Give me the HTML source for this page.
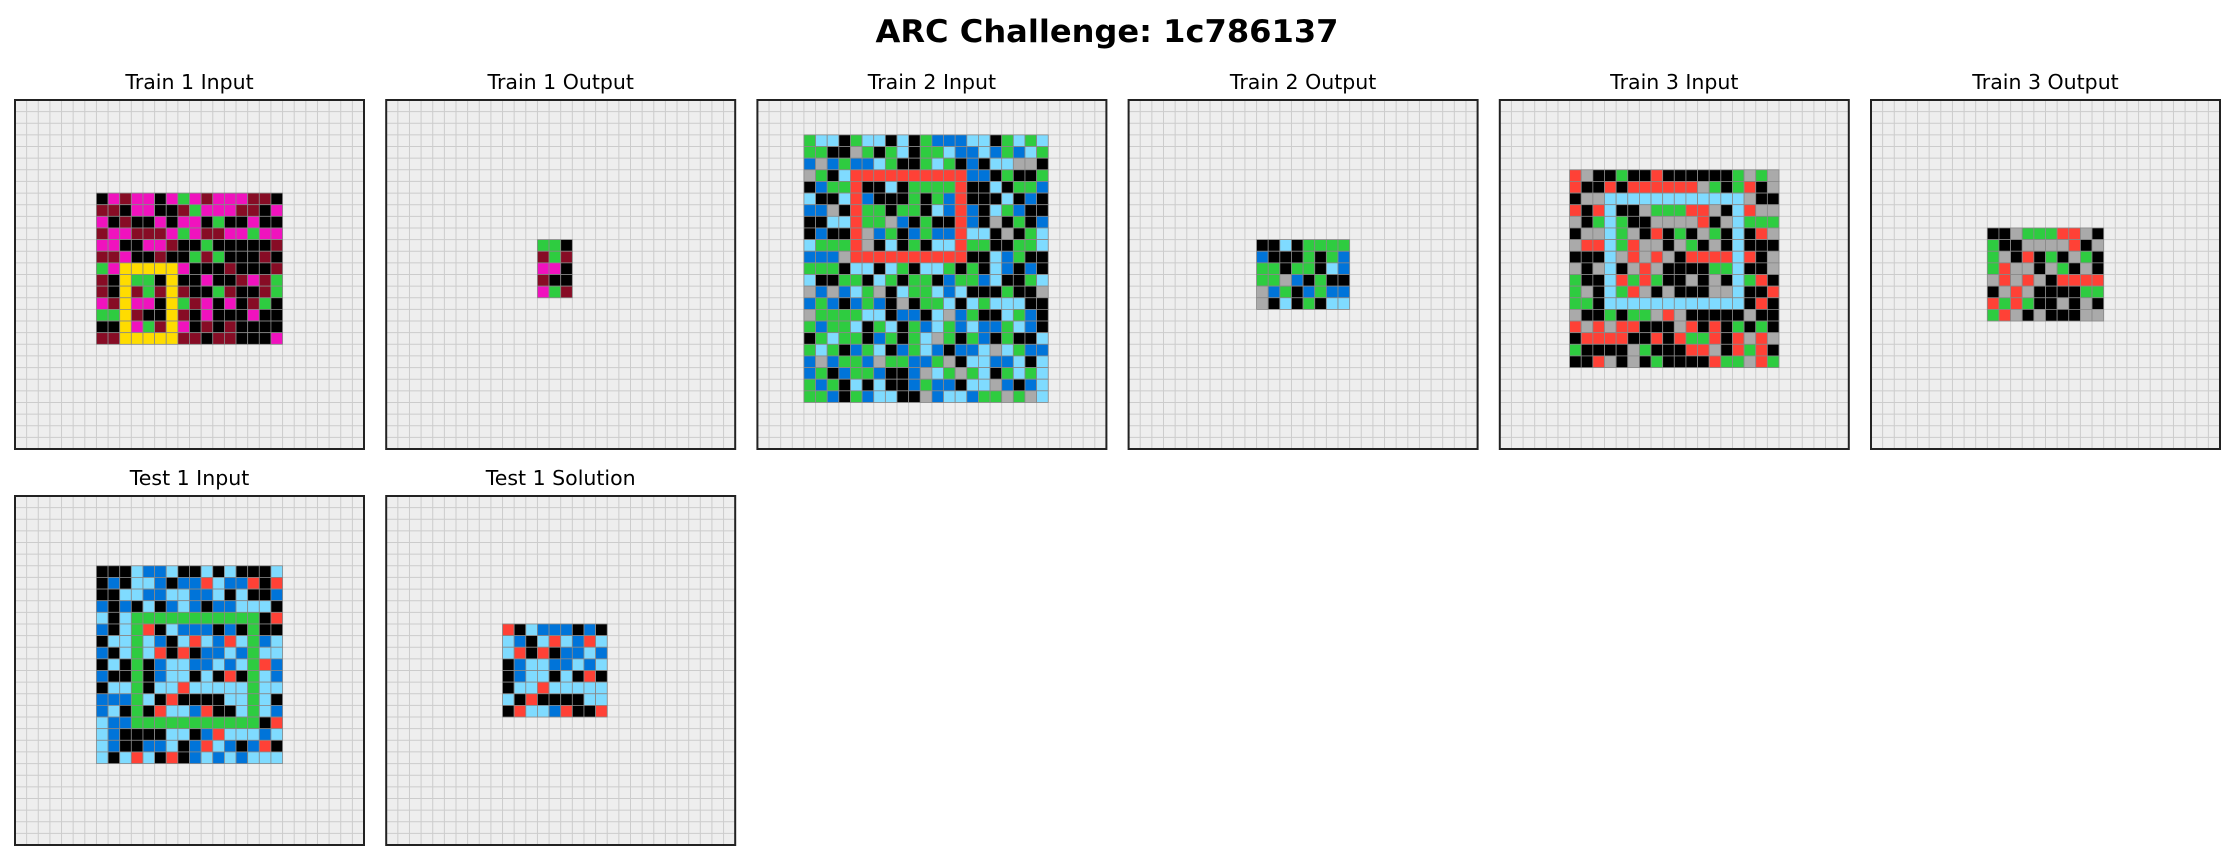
<!DOCTYPE html>
<html><head><meta charset="utf-8"><style>
html,body{margin:0;padding:0;background:#fff;width:2234px;height:860px;overflow:hidden}
</style></head><body>
<svg id="s" xmlns="http://www.w3.org/2000/svg" width="2234" height="860" viewBox="0 0 2234 860">
<rect width="2234" height="860" fill="#fff"/>
<text x="1107" y="42" text-anchor="middle" font-family="DejaVu Sans, Liberation Sans, sans-serif" font-weight="bold" font-size="31" textLength="463" lengthAdjust="spacingAndGlyphs" fill="#000">ARC Challenge: 1c786137</text>
</svg>
<script>
var C={K:'#000000',B:'#0074D9',R:'#FF4136',G:'#2ECC40',Y:'#FFDC00',X:'#AAAAAA',M:'#F012BE',L:'#7FDBFF',W:'#870C25'};
function g(s){return s.trim().split('\n').map(function(r){return r.trim().split(/\s+/)});}
var P=[
['Train 1 Input',0,0,7,8,g(`K M W M M K M G M W M M M W W K
W W K M M K K W G M M M W W K M
M K W K K M K M M K G K K M K K
W M M W W W M G M W W M M G M M
M M K K M M W K K G K K K K K W
W W M K K W K K G W G K K K W K
G M Y Y Y Y Y M K K K W K K K W
W K Y G G K Y K K M K K W M W G
W K Y W G W Y W K K G W K K W G
M W Y M M K Y G W M K M K W G K
G G Y W K K Y W K M K K K M K K
K K Y M G W Y M K W K W K K K K
W W Y Y Y Y Y W W K W W K K K M`)],
['Train 1 Output',1,0,13,12,g(`G G K
W G W
M M K
W K K
M G W`)],
['Train 2 Input',2,0,4,3,g(`G L L K G L L K L K G B B B L L K G L G L
G G K K X G K G L K G G L B B L B G B L G
B X B G B B L G K K G L G K B K L L X X K
X G K L R R R R R R R R R R B B K G K K G
K B G G R K K L K G G G G R K K L K G G B
L K K L R B K K K G K G B R K K K L K B K
B B X K R G G K G G K L B R B K L G B K K
K K L L R G G X B K G K K R B K X K G K B
K B K K R X B G K B G B B R L L K X K G L
L G G G R X K L K G K L L R G G K K G G L
B B B X R R R R R R R R R R K K L B G K K
G G G K L L K L G K L L G K G K L B K B K
L K K G G K L G K G G K B G G B L K K G L
X B X B L G X K L G G L B L K K K G K K X
B G B K B G B K X K G G L K L G L L L K K
X G G G G L L K B B K L X B G K K L G B K
G B G G L K G L K G B L G B L B B G L B K
K G L G G K B G K G L X G K G B K G K K L
G L G K B G L K B G L B K B B L X L G B B
B X B G G B X G G B B G X K L L B B L K L
B G K B G G B K K B X L G X G L K G L G L
G B G K L K L K K B G B B K L L X B K B L
G G B K G B L L K K X B L L B G G X G X L`)],
['Train 2 Output',3,0,11,12,g(`K K L K G G G G
B K K K G K G B
G G K G G K L B
G G X B K G K K
X B G K B G B B
X K L K G K L L`)],
['Train 3 Input',4,0,6,6,g(`R X K K G K K R K K K K K K G X G X
R K K R K R R R R R R X G K G R K X
K X X L L L L L L L L L L L L X K K
R K R L K K X G G G R R X K L R X X
X K G L G K K X X X X R K X L G G G
K X X L G X K R K G K X G K L K R X
X R R L G R X X K X G K X K L K K K
K K K L X R X R X K R R R R L R K X
X K X L K X R X K K K K G G L K K X
G K K L R G R G K K X K X K L G R K
G X K L G R X K X K K K X X L K K R
G G K L L L L L L L L L L L L K R K
X K K G K G G X R X K K K K K X K K
R X R X R R K K K X R K R K G K G K
K R R R R K K R K R G G R K R X R X
G K K K K X G K K K R R X K R G R K
K K R X K X K G K K K K R G G X R G`)],
['Train 3 Output',5,0,10,11,g(`K K X G G G R R X K
G K K X X X X R K X
G X K R K G K X G K
G R X X K X G K X K
X R X R X K R R R R
K X R X K K K K G G
R G R G K K X K X K
G R X K X K K K X X`)],
['Test 1 Input',0,1,7,6,g(`K K K L B B L K K L K L K K K L
K B K L L B K B B R L B B R K R
K K L L B B L L B B L K L K K B
B K B K L K B L B K B B L L L K
L K L G G G G G G G G G G G K R
B K L G R K L B B B K B K G K K
K L L G L B K L R L B R L G B L
B K L G L R K R K B B L B G L L
K L K G K B L L B B L B L G R B
B K K G K B L L K L K R K G L B
K L L G K L L R L L L L L G L L
B B B G L K R K K K K L L G L K
B L K G K R L L B R K K L G L B
L B B G G G G G G G G G G G K R
L B K K K K L L K B R L L L B L
L B K K B B L K B R L B K B R K
L K L R L K R K B L B L B L L L`)],
['Test 1 Solution',1,1,10,11,g(`R K L B B B K B K
L B K L R L B R L
L R K R K B B L B
K B L L B B L B L
K B L L K L K R K
K L L R L L L L L
L K R K K K K L L
K R L L B R K K R`)]
];
var h='',S=349,c=S/30;
P.forEach(function(p){
 var x0=15+p[1]*371.2,y0=p[2]?496:100;
 h+='<text x="'+(x0+S/2)+'" y="'+(y0-11)+'" text-anchor="middle" font-family="DejaVu Sans, Liberation Sans, sans-serif" font-size="20.5" fill="#000">'+p[0]+'</text>';
 h+='<rect x="'+x0+'" y="'+y0+'" width="'+S+'" height="'+S+'" fill="#EEEEEE"/>';
 for(var i=1;i<30;i++){var a=(i*c).toFixed(2);
  h+='<line x1="'+(x0+ +a)+'" y1="'+y0+'" x2="'+(x0+ +a)+'" y2="'+(y0+S)+'" stroke="#CCCCCC" stroke-width="1"/>';
  h+='<line x1="'+x0+'" y1="'+(y0+ +a)+'" x2="'+(x0+S)+'" y2="'+(y0+ +a)+'" stroke="#CCCCCC" stroke-width="1"/>';}
 p[5].forEach(function(r,ri){r.forEach(function(v,ci){
  h+='<rect x="'+(x0+(p[3]+ci)*c).toFixed(2)+'" y="'+(y0+(p[4]+ri)*c).toFixed(2)+'" width="'+c.toFixed(2)+'" height="'+c.toFixed(2)+'" fill="'+C[v]+'" stroke="#888" stroke-width="0.8"/>';});});
 h+='<rect x="'+x0+'" y="'+y0+'" width="'+S+'" height="'+S+'" fill="none" stroke="#222" stroke-width="2"/>';
});
document.getElementById('s').insertAdjacentHTML('beforeend',h);
</script>
</body></html>
